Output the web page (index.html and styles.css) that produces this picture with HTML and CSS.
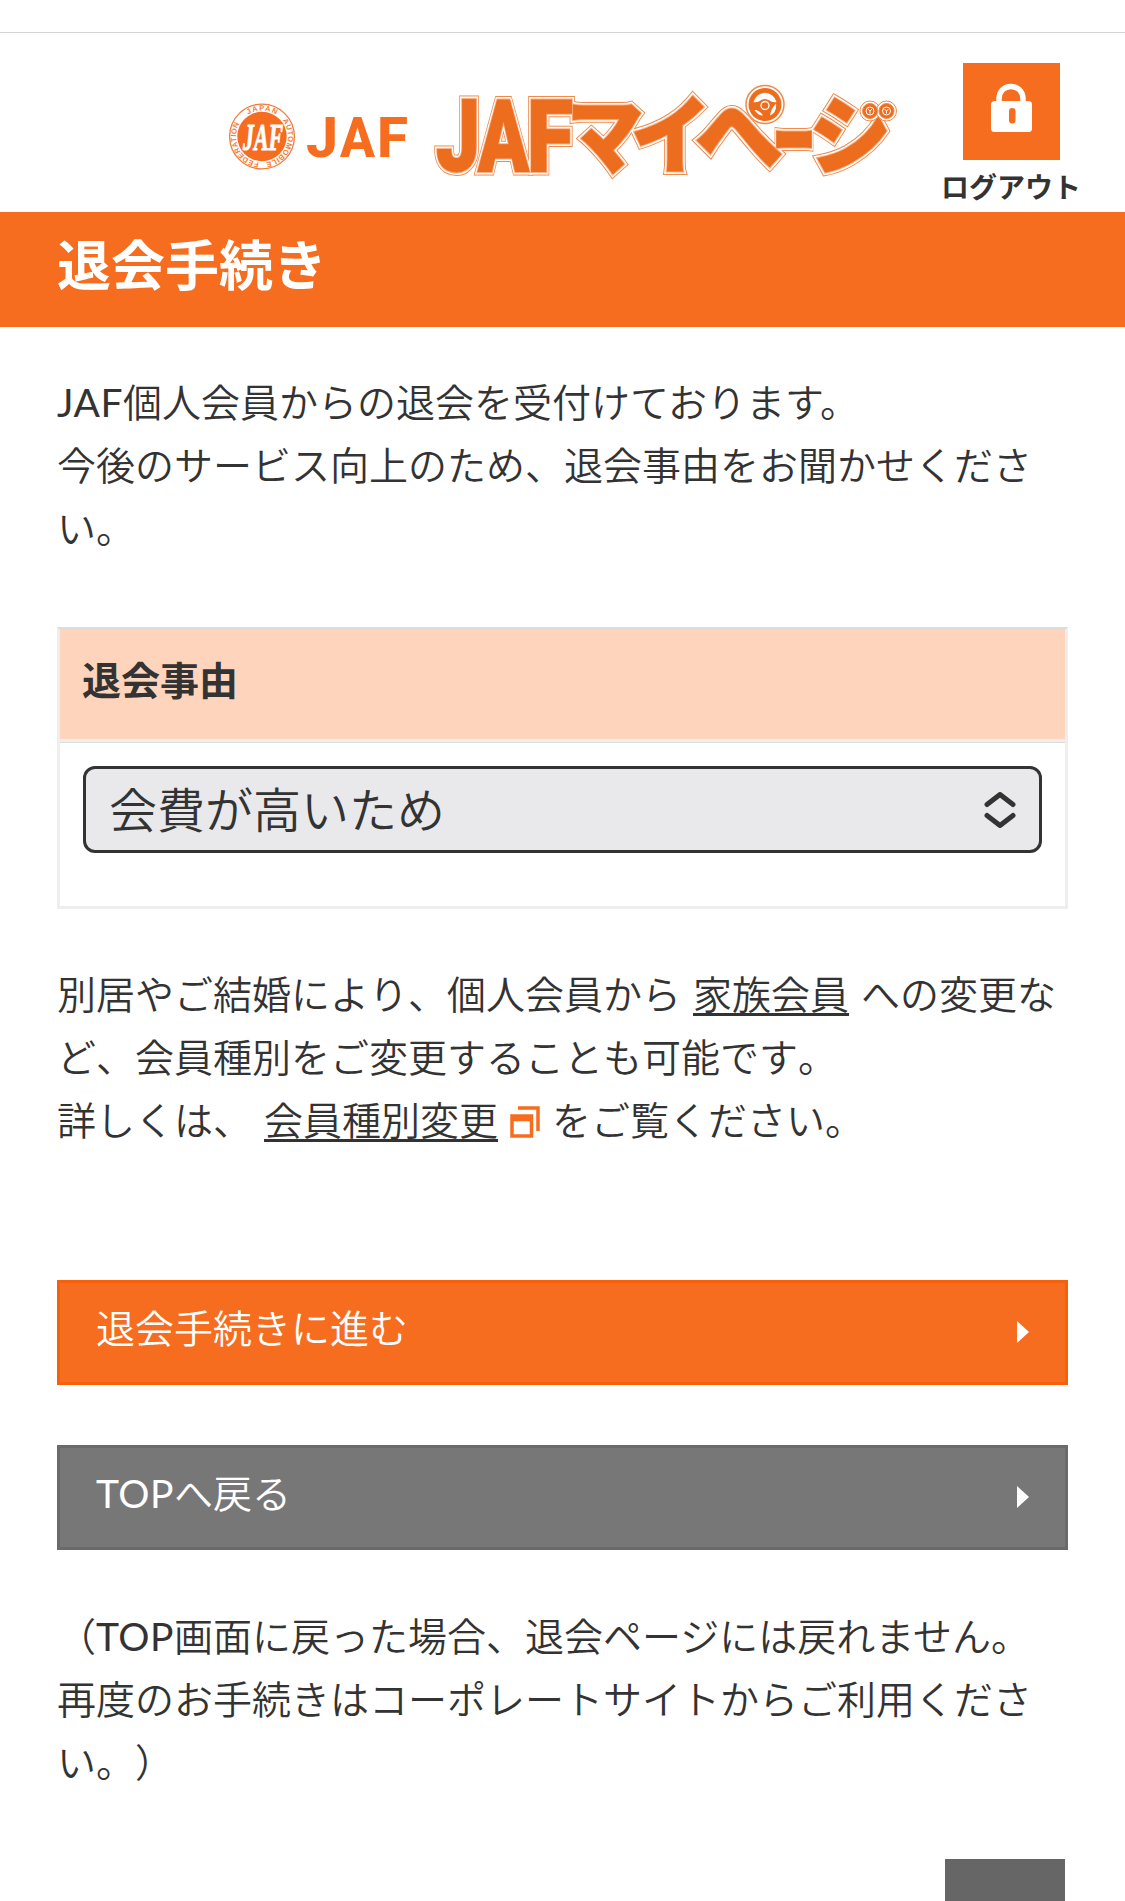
FILE: index.html
```
<!DOCTYPE html>
<html lang="ja">

<head>
    <meta charset="UTF-8">
    <meta name="viewport" content="width=device-width, initial-scale=1.0">
    <title>退会手続き</title>
    <link rel="stylesheet" href="styles.css">
</head>

<body>
    <header class="header">
        <svg class="logo-jaf" viewBox="228 100 182 74" role="img" aria-label="JAF">
            <defs>
                <path id="ring" d="M262 110.500a26 26 0 0 1 0 52a26 26 0 0 1 0 -52" />
            </defs>
            <circle cx="262" cy="136.500" r="32.400" fill="#fff" stroke="#f47b36" stroke-width="1.300" />
            <circle cx="262" cy="136.500" r="24.700" fill="#f76d1f" />
            <!-- 外周の文字 -->
            <g class="ring-text">
                <text transform="rotate(-32 262 136.500)" textLength="29"><textPath href="#ring">JAPAN</textPath></text>
                <text transform="rotate(52 262 136.500)" textLength="54"><textPath href="#ring">AUTOMOBILE</textPath></text>
                <text transform="rotate(187 262 136.500)" textLength="51"><textPath href="#ring">FEDERATION</textPath></text>
            </g>
            <text class="monogram" x="243" y="150" textLength="40" lengthAdjust="spacingAndGlyphs">JAF</text>
            <g class="jaf-text">
                <text x="306" y="157" textLength="32" lengthAdjust="spacingAndGlyphs">J</text>
                <text x="340" y="157" textLength="35" lengthAdjust="spacingAndGlyphs">A</text>
                <text x="377" y="157" textLength="31" lengthAdjust="spacingAndGlyphs">F</text>
            </g>
        </svg>

        <svg class="logo-mypage" viewBox="434 82 466 98" role="img" aria-label="JAFマイページ">
            <defs>
                <g id="mypage">
                    <g class="latin">
                        <text x="436" y="171" textLength="44" lengthAdjust="spacingAndGlyphs">J</text>
                        <text x="478" y="171" textLength="51" lengthAdjust="spacingAndGlyphs">A</text>
                        <text x="527" y="171" textLength="46" lengthAdjust="spacingAndGlyphs">F</text>
                    </g>
                    <g class="kana">
                        <text x="567" y="167" textLength="76" lengthAdjust="spacingAndGlyphs">マ</text>
                        <text x="631" y="167" textLength="80" lengthAdjust="spacingAndGlyphs">イ</text>
                        <text x="695" y="167" textLength="88" lengthAdjust="spacingAndGlyphs">へ</text>
                        <text x="773" y="172" textLength="42" lengthAdjust="spacingAndGlyphs">ー</text>
                        <text x="809" y="167" textLength="82" lengthAdjust="spacingAndGlyphs">シ</text>
                    </g>
                </g>
            </defs>
            <use href="#mypage" class="line-out" />
            <use href="#mypage" class="line-gap" />
            <use href="#mypage" class="line-in" />
            <use href="#mypage" class="line-fill" />
            <!-- ハンドル -->
            <g>
                <circle cx="765" cy="104.500" r="19" fill="#fff" stroke="#ee8a4a" stroke-width="1.500" />
                <circle cx="765" cy="104.500" r="16.500" fill="#ed6d1f" />
                <path d="M753.500 102a11.800 11.800 0 0 1 23 0q-4 1-7-1.500q-4.500-3-9 0q-3 2.500-7 1.500zM754.500 110q5 0 8.500 5.500q-5 0-8.500-5.500zM770 115.500q1-7 6-12q1 9-6 12z" fill="#fff" />
                <circle cx="765" cy="105.500" r="4" fill="#ed6d1f" stroke="#fff" stroke-width="1.300" />
            </g>
            <!-- タイヤ -->
            <g fill="#ed6d1f" stroke="#ee8a4a">
                <circle cx="870" cy="111" r="10" fill="#fff" />
                <circle cx="886.500" cy="111" r="10" fill="#fff" />
                <circle cx="870" cy="111" r="7.500" />
                <circle cx="886.500" cy="111" r="7.500" />
                <g fill="none" stroke="#fff" stroke-width="1">
                    <circle cx="870" cy="111" r="4" />
                    <circle cx="886.500" cy="111" r="4" />
                    <path d="M870 113.500v-2.500l-2-2M870 111l2-2M886.500 113.500v-2.500l-2-2M886.500 111l2-2" />
                </g>
            </g>
        </svg>

        <a class="logout" href="#">
            <svg class="logout-icon" viewBox="0 0 97 97" aria-hidden="true">
                <rect width="97" height="97" fill="#f76d1f" />
                <path d="M36 40v-4c0-7.500 5-12.500 12-12.500s12 5 12 12.500v4" fill="none" stroke="#fff" stroke-width="5.500" />
                <rect x="28" y="38" width="41" height="31" rx="3.500" fill="#fff" />
                <rect x="46" y="45" width="6.500" height="15.500" rx="3.250" fill="#f76d1f" />
            </svg>
            <span class="logout-text">ログアウト</span>
        </a>
    </header>

    <h1 class="title">退会手続き</h1>

    <main class="main">
        <p class="lead"><span class="en">JAF</span>個人会員からの退会を受付けております。<br>今後のサービス向上のため、退会事由をお聞かせください。</p>

        <!-- 退会事由 -->
        <div class="form">
            <label class="form-head" for="reason">退会事由</label>
            <div class="form-body">
                <div class="select-box">
                    <select id="reason" class="select">
                        <option>会費が高いため</option>
                    </select>
                    <svg class="select-arrow" viewBox="0 0 32 36" aria-hidden="true">
                        <path d="M3 12.500l13-10l13 10M3 23.500l13 10l13-10" />
                    </svg>
                </div>
            </div>
        </div>

        <p class="note">別居やご結婚により、個人会員から<a class="link" href="#">家族会員</a>への変更など、会員種別をご変更することも可能です。<br>詳しくは、<a class="link" href="#">会員種別変更</a><svg class="blank-icon" viewBox="0 0 30 32" aria-hidden="true"><path d="M8 2h20v23" /><path d="M2 10h19.500v20h-19.500zM2 13.500h19.500" /></svg>をご覧ください。</p>

        <div class="buttons">
            <a class="btn btn-next" href="#">退会手続きに進む</a>
            <a class="btn btn-back" href="#"><span><span class="en">TOP</span>へ戻る</span></a>
        </div>

        <p class="caution">（<span class="en">TOP</span>画面に戻った場合、退会ページには戻れません。<br>再度のお手続きはコーポレートサイトからご利用ください。）</p>

        <a class="page-top" href="#" aria-label="ページの先頭へ"></a>
    </main>
</body>

</html>
```
FILE: styles.css
```
* {
    box-sizing: border-box;
}

body {
    margin: 0;
    padding-top: 32px;
    background-color: #fff;
    color: #333;
    font-family: Lato, "Noto Sans CJK JP", sans-serif;
    font-size: 39px;
    font-weight: 350;
    line-height: 63px;
    text-spacing-trim: space-all;
    overflow-x: hidden;
}

p,
h1 {
    margin: 0;
}

a {
    color: inherit;
    text-decoration: none;
}

/* 英字 */
.en {
    font-weight: 400;
    letter-spacing: 0.5px;
}

/* ヘッダー */
.header {
    display: flex;
    height: 180px;
    padding-left: 228px;
    border-top: 1px solid #d5d5d5;
}

.logo-jaf {
    width: 182px;
    height: 74px;
    margin-top: 67px;
}

.logo-mypage {
    width: 466px;
    height: 98px;
    margin: 49px 0 0 24px;
}

.ring-text {
    fill: #f47b36;
    font-family: "Liberation Sans", sans-serif;
    font-size: 7.5px;
    font-weight: bold;
}

.monogram {
    fill: #fff;
    stroke: #fff;
    stroke-width: 1px;
    font-family: "Liberation Serif", serif;
    font-size: 38px;
    font-style: italic;
    font-weight: bold;
}

.jaf-text {
    fill: #f76d1f;
    font-family: Roboto, sans-serif;
    font-size: 56px;
    font-weight: 800;
}

.latin {
    font-family: Roboto, sans-serif;
    font-size: 101px;
    font-weight: 900;
}

.kana {
    font-family: "Noto Sans CJK JP", sans-serif;
    font-size: 85px;
    font-weight: 900;
}

/* 文字の縁取り */
.line-out {
    fill: #ee8a4a;
    stroke: #ee8a4a;
    stroke-width: 8px;
}

.line-gap {
    fill: #fff;
    stroke: #fff;
    stroke-width: 6px;
}

.line-in {
    fill: #f6b48d;
    stroke: #f6b48d;
    stroke-width: 3px;
}

.line-fill {
    fill: #ed6d1f;
    stroke: #ed6d1f;
    stroke-width: 1px;
}

.logout {
    display: flex;
    flex-direction: column;
    align-items: center;
    width: 150px;
    margin: 30px 0 0 36px;
}

.logout-icon {
    width: 97px;
    height: 97px;
}

.logout-text {
    margin-top: 10px;
    font-size: 28px;
    font-weight: 600;
    line-height: 34px;
}

/* タイトル */
.title {
    height: 115px;
    padding: 0 57px;
    background-color: #f76d1f;
    color: #fff;
    font-size: 54px;
    font-weight: 700;
    line-height: 108px;
}

.main {
    padding: 44px 57px 0;
}

/* 入力欄 */
.form {
    height: 282px;
    margin-top: 67px;
    border: 3px solid #eee;
    border-top-color: #dcdcdc;
}

.form-head {
    display: block;
    height: 112px;
    padding: 19px 22px;
    border-bottom: 3px solid #eee;
    background-color: #ffd4bc;
    font-weight: 700;
}

.form-body {
    padding: 23px;
    border-top: 1px solid #dcdcdc;
}

.select-box {
    position: relative;
}

.select {
    display: block;
    width: 100%;
    height: 87px;
    padding: 0 23px;
    border: 3px solid #333;
    border-radius: 12px;
    background-color: #e9e9eb;
    color: #333;
    font: inherit;
    font-size: 48px;
    appearance: none;
}

.select-arrow {
    position: absolute;
    top: 26px;
    right: 26px;
    width: 32px;
    height: 36px;
    fill: none;
    stroke: #333;
    stroke-width: 5;
    stroke-linecap: round;
    stroke-linejoin: round;
    pointer-events: none;
}

.note {
    margin-top: 54px;
    font-kerning: none;
}

.link {
    margin: 0 12px;
    text-decoration: underline;
    text-decoration-thickness: 3px;
    text-underline-offset: 4px;
    text-decoration-skip-ink: none;
}

.blank-icon {
    width: 30px;
    height: 32px;
    margin-right: 12px;
    vertical-align: -3px;
    fill: none;
    stroke: #f76d1f;
    stroke-width: 3.5;
}

/* ボタン */
.buttons {
    display: grid;
    gap: 60px;
    margin: 128px 0 55px;
}

.btn {
    display: flex;
    align-items: center;
    justify-content: space-between;
    height: 105px;
    padding: 0 36px 8px 36px;
    border: 3px solid;
    color: #fff;
}

.btn::after {
    content: "";
    margin-top: 7px;
    border: 11px solid transparent;
    border-right-width: 0;
    border-left: 12px solid #fff;
}

.btn-next {
    border-color: #f66009;
    background-color: #f76d1f;
}

.btn-back {
    border-color: #6a6a6a;
    background-color: #777;
}

.page-top {
    display: block;
    width: 120px;
    height: 42px;
    margin: 65px 3px 0 auto;
    background-color: #666;
}
```
